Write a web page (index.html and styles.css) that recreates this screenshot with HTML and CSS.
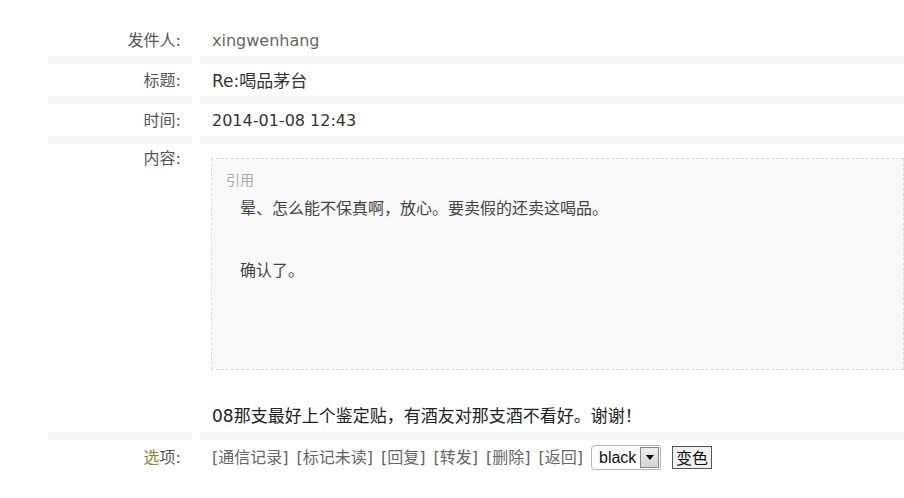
FILE: index.html
```html
<!DOCTYPE html>
<html lang="zh-CN">

<head>
  <meta charset="UTF-8">
  <meta name="viewport" content="width=device-width, initial-scale=1.0">
  <title>短消息</title>
  <link rel="stylesheet" href="styles.css">
</head>

<body>
  <main class="msg">
    <div class="row">
      <div class="label">发件人:</div>
      <div class="value sender">xingwenhang</div>
    </div>
    <div class="row">
      <div class="label">标题:</div>
      <div class="value title">Re:喝品茅台</div>
    </div>
    <div class="row">
      <div class="label">时间:</div>
      <div class="value">2014-01-08 12:43</div>
    </div>
    <div class="row content">
      <div class="label">内容:</div>
      <div class="value">
        <blockquote class="quote">
          <span class="quote-title">引用</span>
          <p>晕、怎么能不保真啊，放心。要卖假的还卖这喝品。</p>
          <p class="blank">&nbsp;</p>
          <p>确认了。</p>
        </blockquote>
        <p class="body">08那支最好上个鉴定贴，有酒友对那支酒不看好。谢谢！</p>
      </div>
    </div>
    <div class="row options">
      <div class="label"><span class="hl">选</span>项:</div>
      <div class="value">
        <a href="#">[通信记录]</a>
        <a href="#">[标记未读]</a>
        <a href="#">[回复]</a>
        <a href="#">[转发]</a>
        <a href="#">[删除]</a>
        <a href="#">[返回]</a>
        <span class="picker">
          <select>
            <option>black</option>
            <option>red</option>
            <option>blue</option>
          </select>
          <span class="arrow">
            <svg width="8" height="5" viewBox="0 0 8 5"><path d="M0 0h8L4 5z" fill="#000"/></svg>
          </span>
        </span>
        <button type="button">变色</button>
      </div>
    </div>
  </main>
</body>

</html>
```

FILE: styles.css
```css
body {
  margin: 0;
  background: #fff;
  font-family: "DejaVu Sans", "Noto Sans CJK SC", sans-serif;
  color: #333;
}

.msg {
  padding-top: 24px;
  padding-left: 48px;
}

.row {
  display: grid;
  grid-template-columns: 144px 1fr;
  column-gap: 8px;

  >div {
    border-bottom: 8px solid #f7f7f7;
    padding: 5px 0 3px;
    line-height: 24px;
  }
}

.label {
  text-align: right;
  padding-right: 11px !important;
  font-size: 16px;
  color: #555;
}

.value {
  padding-left: 12px !important;
  font-size: 16px;
  color: #333;
}

.sender {
  color: #666;
}

.title {
  font-size: 17px;
}

.content {
  >div {
    padding-top: 3px;
  }

  .value {
    padding-top: 14px !important;
    padding-bottom: 4px;
  }
}

.quote {
  box-sizing: border-box;
  height: 212px;
  margin: 0 0 0 -1px;
  padding: 10px 14px;
  border: 1px dashed #dcdcdc;
  background: #f8f8f8;

  p {
    margin: 0;
    padding-left: 14px;
    line-height: 31px;
    font-size: 16px;
    color: #444;
  }

  p:first-of-type {
    margin-top: 2px;
  }
}

.quote-title {
  display: block;
  line-height: 22px;
  font-size: 14px;
  color: #aaa;
}

.body {
  margin: 34px 0 0;
  line-height: 24px;
  font-size: 17px;
  color: #222;
}

.options {
  >div {
    display: flex;
    align-items: center;
    padding: 5px 0;
    border-bottom: 0;
  }

  .label {
    justify-content: flex-end;
  }

  .value {
    gap: 7px;
  }

  a {
    color: #666;
    text-decoration: none;
    font-size: 16px;
    margin-right: 1px;
  }
}

.hl {
  color: #8a8a30;
}

.picker {
  display: flex;
  align-items: center;
  height: 25px;
  padding: 0 1px 0 0;
  box-sizing: border-box;
  border: 1px solid #b5b5b5;
  border-radius: 4px 2px 2px 4px;
  background: #fff;

  select {
    appearance: none;
    border: 0;
    outline: 0;
    background: transparent;
    font-family: "Liberation Sans", sans-serif;
    font-size: 16px;
    color: #111;
    padding: 0 4px 0 7px;
    width: 48px;
  }
}

.arrow {
  display: flex;
  align-items: center;
  justify-content: center;
  width: 17px;
  height: 19px;
  border: 1px solid #888;
  background: linear-gradient(#eee, #d4d4d4);
}

button {
  margin-left: 4px;
  height: 23px;
  padding: 0 3px;
  font-family: "Noto Sans CJK SC", sans-serif;
  font-size: 16px;
  line-height: 19px;
  color: #111;
  background: #f0f0f0;
  border: 1px solid #555;
  border-radius: 0;
  cursor: pointer;
}
```
